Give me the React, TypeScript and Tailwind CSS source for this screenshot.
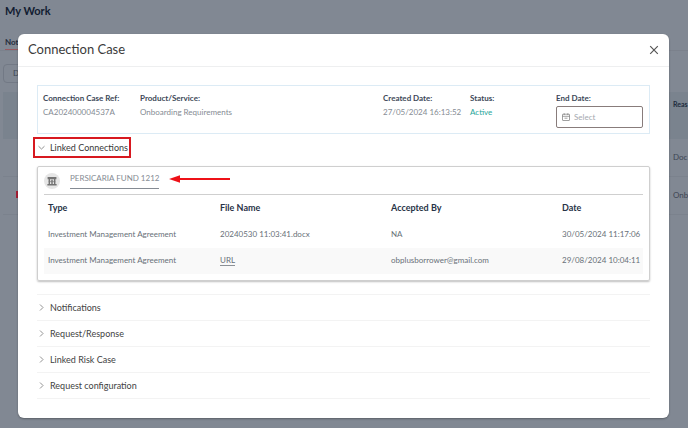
import { useState } from "react";
import type { ReactNode } from "react";

type LinkedFile = {
  type: string;
  fileName: string;
  isUrl?: boolean;
  acceptedBy: string;
  date: string;
};

const files: LinkedFile[] = [
  {
    type: "Investment Management Agreement",
    fileName: "20240530 11:03:41.docx",
    acceptedBy: "NA",
    date: "30/05/2024 11:17:06",
  },
  {
    type: "Investment Management Agreement",
    fileName: "URL",
    isUrl: true,
    acceptedBy: "obplusborrower@gmail.com",
    date: "29/08/2024 10:04:11",
  },
];

const sections = ["Notifications", "Request/Response", "Linked Risk Case", "Request configuration"];

export default function App() {
  return (
    <div className="relative min-h-screen overflow-hidden bg-[#818893] font-['Lato',sans-serif]">
      <WorkPage />
      <div className="absolute inset-0 pt-[34px] pr-[19px] pb-[10px] pl-[18px]">
        <ConnectionCaseDialog />
      </div>
    </div>
  );
}

// The dimmed page that sits behind the dialog
function WorkPage() {
  return (
    <div aria-hidden="true" className="text-[8px] text-[#3e4654]">
      <h1 className="px-[5px] pt-[3px] text-[11px] leading-[15px] font-bold text-[#111c31]">My Work</h1>
      <div className="mt-[17px] flex border-b border-[#7b818c] pl-[5px]">
        <span className="w-[50px] border-b border-[#9a5a61] leading-[14px] font-bold text-[#242c3d]">Not</span>
      </div>
      <div className="mt-[13px] flex pl-[3px]">
        <span className="w-20 rounded-sm border border-[#727985] pl-[9px] leading-[17px]">D</span>
      </div>
      <div className="mt-[9px] ml-[3px] flex h-[47px] items-start justify-between bg-[#7a838e] pt-[7px] text-[7px]">
        <span />
        <span className="w-[15px] leading-[11px] font-bold whitespace-nowrap text-[#202b3d]">Reas</span>
      </div>
      <WorkRow text="Doc" />
      <WorkRow text="Onb" flagged />
    </div>
  );
}

function WorkRow({ text, flagged }: { text: string; flagged?: boolean }) {
  return (
    <div className="ml-[3px] flex h-[38px] items-center justify-between border-b border-[#7b828d] pb-[2px]">
      <span className={flagged ? "ml-[13px] h-[7px] w-3 bg-[#a51f35]" : ""} />
      <span className="w-[15px] whitespace-nowrap">{text}</span>
    </div>
  );
}

function ConnectionCaseDialog() {
  const [endDate, setEndDate] = useState("");

  return (
    <div
      role="dialog"
      aria-labelledby="dialog-title"
      className="h-full rounded-md bg-white shadow-[0_1px_2px_rgba(0,0,0,0.3)]"
    >
      <header className="flex h-[33px] items-center justify-between border-b border-[#eeeff0] px-[10px]">
        <h2 id="dialog-title" className="text-[13px] text-[#3b3b3b]">Connection Case</h2>
        <button type="button" aria-label="Close" className="text-[#555]">
          <svg viewBox="0 0 10 10" className="size-[10px]" fill="none" stroke="currentColor" strokeWidth="1.2">
            <path d="M1.2 1.2l7.6 7.6M8.8 1.2L1.2 8.8" />
          </svg>
        </button>
      </header>

      <div className="px-[19px] pt-[18px]">
        <section className="flex h-[49px] border border-[#dcebf5] pt-[6px] pr-[6px] pl-[5px]">
          <Field label="Connection Case Ref:" className="w-[97px]">CA202400004537A</Field>
          <Field label="Product/Service:" className="flex-1">Onboarding Requirements</Field>
          <Field label="Created Date:" className="w-[87px]">27/05/2024 16:13:52</Field>
          <Field label="Status:" className="w-[86px]">
            <span className="text-[#26a69a]">Active</span>
          </Field>
          <div className="w-[87px]">
            <label htmlFor="end-date" className="block text-[8px] leading-3 font-bold text-[#3c4858]">End Date:</label>
            <div className="mt-[2px] flex h-[22px] items-center gap-1 rounded-xs border border-[#887c7b] px-[5px]">
              <CalendarIcon />
              <input
                id="end-date"
                value={endDate}
                onChange={(e) => setEndDate(e.target.value)}
                placeholder="Select"
                className="h-3 w-full min-w-0 pb-px text-[8px] leading-3 text-[#6b7280] outline-none placeholder:text-[#a5a9af]"
              />
            </div>
          </div>
        </section>

        <button
          type="button"
          aria-expanded="true"
          className="mt-[3px] -ml-1 flex h-[21px] items-center gap-[5px] border-2 border-[#d71920] pr-px pl-[3px] text-[9px] text-[#383838]"
        >
          <Chevron open />
          Linked Connections
        </button>

        <section className="mt-[8px] rounded-xs border border-[#cfcfcf] px-[6px] pb-[6px] shadow-[0_1px_2px_rgba(0,0,0,0.25)]">
          <div className="flex h-[28px] items-start border-b border-[#cfcfcf]">
            <span className="mt-[6px] flex size-4 items-center justify-center rounded-full bg-[#e6e6e6]">
              <BankIcon />
            </span>
            <a
              href="#fund"
              className="mt-[5px] ml-[10px] border-b border-[#858b93] pb-1 text-[8px] leading-3 text-[#858b93]"
            >
              PERSICARIA FUND 1212
            </a>
            <svg viewBox="0 0 62 8" className="mt-[8px] ml-[10px] h-2 w-[62px]" fill="#ee1118">
              <path d="M0 4L11 0.3V3.1H61V4.9H11V7.7Z" />
            </svg>
          </div>
          <LinkedFilesTable />
        </section>

        <div className="mt-[13px] border-t border-[#f3f3f3]">
          {sections.map((title) => (
            <button
              key={title}
              type="button"
              aria-expanded="false"
              className="flex h-[26px] w-full items-center gap-[5px] border-b border-[#f3f3f3] pl-px text-[9px] text-[#424242]"
            >
              <Chevron />
              {title}
            </button>
          ))}
        </div>
      </div>
    </div>
  );
}

function Field({ label, className, children }: { label: string; className: string; children: ReactNode }) {
  return (
    <dl className={className}>
      <dt className="text-[8px] leading-3 font-bold whitespace-nowrap text-[#3c4858]">{label}</dt>
      <dd className="mt-[2px] text-[8px] leading-3 whitespace-nowrap text-[#858b93]">{children}</dd>
    </dl>
  );
}

function LinkedFilesTable() {
  return (
    <table className="w-full table-fixed text-left text-[8px] text-[#687078]">
      <thead>
        <tr className="h-[27px] text-[9px] text-[#283347]">
          <th className="w-[176px] pb-[2px] pl-[4px] font-bold">Type</th>
          <th className="pb-[2px] font-bold">File Name</th>
          <th className="pb-[2px] font-bold">Accepted By</th>
          <th className="w-[81px] pb-[2px] font-bold">Date</th>
        </tr>
      </thead>
      <tbody>
        {files.map((file) => (
          <tr key={file.date} className="h-[26px] whitespace-nowrap even:bg-[#f9f9f9]">
            <td className="pb-[2px] pl-[4px]">{file.type}</td>
            <td className="pb-[2px]">
              {file.isUrl ? (
                <a href="#url" className="border-b border-[#8b9096]">{file.fileName}</a>
              ) : (
                file.fileName
              )}
            </td>
            <td className="pb-[2px]">{file.acceptedBy}</td>
            <td className="pb-[2px]">{file.date}</td>
          </tr>
        ))}
      </tbody>
    </table>
  );
}

function Chevron({ open }: { open?: boolean }) {
  return (
    <svg viewBox="0 0 7 7" className="size-[7px]" fill="none" stroke="#777" strokeWidth="0.8">
      <path d={open ? "M0.5 2.2L3.5 5L6.5 2.2" : "M2 0.5L5 3.5L2 6.5"} />
    </svg>
  );
}

function CalendarIcon() {
  return (
    <svg viewBox="0 0 8 8" className="size-2 shrink-0" fill="none" stroke="#777" strokeWidth="0.7">
      <rect x="0.5" y="1.2" width="7" height="6.3" rx="0.5" />
      <path d="M0.5 3.3H7.5M2.2 0.3V2M5.8 0.3V2M2.5 5.2H5.5" />
    </svg>
  );
}

function BankIcon() {
  return (
    <svg viewBox="0 0 10 10" className="size-[10px]" fill="#747474">
      <path d="M0.6 1H9.4V3.2H0.6ZM0.4 8H9.6V9.4H0.4ZM1.6 3.2H3V8H1.6ZM4.3 3.8H5.7V8H4.3ZM7 3.2H8.4V8H7Z" />
      <path d="M1.6 4.8H8.4V6.2H1.6Z" opacity="0.6" />
    </svg>
  );
}
